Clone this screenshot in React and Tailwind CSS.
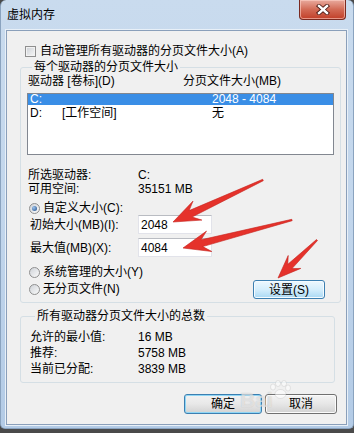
import React from "react";

function arrow(t, h, headLen, headW, neckW, tailW) {
  const dx = h[0] - t[0], dy = h[1] - t[1];
  const L = Math.hypot(dx, dy);
  const ux = dx / L, uy = dy / L, nx = -uy, ny = ux;
  const p = (x, y) => `${x.toFixed(1)},${y.toFixed(1)}`;
  const nk = [h[0] - ux * headLen * 0.72, h[1] - uy * headLen * 0.72];
  const wb = [h[0] - ux * headLen, h[1] - uy * headLen];
  return [
    p(t[0] + (nx * tailW) / 2, t[1] + (ny * tailW) / 2),
    p(nk[0] + (nx * neckW) / 2, nk[1] + (ny * neckW) / 2),
    p(wb[0] + (nx * headW) / 2, wb[1] + (ny * headW) / 2),
    p(h[0], h[1]),
    p(wb[0] - (nx * headW) / 2, wb[1] - (ny * headW) / 2),
    p(nk[0] - (nx * neckW) / 2, nk[1] - (ny * neckW) / 2),
    p(t[0] - (nx * tailW) / 2, t[1] - (ny * tailW) / 2),
  ].join(" ");
}

function Checkbox() {
  return (
    <span className="w-[11px] h-[11px] border border-[#8f8f8f] bg-gradient-to-br from-[#cdd1d6] to-[#f7f7f7] shadow-[inset_0_0_0_1px_#f2f2f2] shrink-0" />
  );
}

function Radio({ checked }) {
  return (
    <span className="w-[11px] h-[11px] rounded-full border border-[#8f8f8f] bg-gradient-to-br from-[#cfd3d8] to-[#fafafa] flex items-center justify-center shrink-0">
      {checked && (
        <span className="w-[5px] h-[5px] rounded-full bg-radial-[at_35%_35%] from-[#9cc3ee] to-[#1d4a85]" />
      )}
    </span>
  );
}

function Btn({ children, kind, className }) {
  const base =
    "h-[20px] rounded-[3px] border flex items-center justify-center text-[12px] leading-[14px] text-black ";
  let look =
    "border-[#707070] bg-gradient-to-b from-[#f4f4f4] via-[#e6e6e6] to-[#d2d2d2] shadow-[inset_0_0_0_1px_#fbfbfb]";
  if (kind === "hot")
    look =
      "border-[#3c7fb1] bg-gradient-to-b from-[#eef8fe] via-[#d5eefc] to-[#a9d9f4] shadow-[inset_0_0_0_1px_#f5fbff]";
  if (kind === "default")
    look =
      "border-[#3c7fb1] bg-gradient-to-b from-[#f2f2f2] via-[#e8e8e8] to-[#d2d2d2] shadow-[inset_0_0_0_1px_#8fd6f5]";
  return <div className={base + look + " " + (className || "")}>{children}</div>;
}

export default function App() {
  const a1 = arrow([263, 180], [173, 222], 27, 21, 7, 1.5);
  const a2 = arrow([292, 220], [183, 248], 27, 21, 7, 1.5);
  const a3 = arrow([317, 240], [278, 278], 23, 18, 6, 1.5);

  return (
    <div className="relative w-[354px] h-[433px] overflow-hidden bg-[#4a4a4a] font-['Liberation_Sans','Noto_Sans_CJK_SC',sans-serif] text-[12px] leading-[14px] text-black">
      <div className="w-[354px] h-[429px] rounded-t-[6px] rounded-b-[5px] border-x border-b border-[#8aa3bf] bg-gradient-to-b from-[#c9dbee] via-[#c2d6ec] to-[#b3cbe6] flex flex-col">
        {/* title bar */}
        <div className="h-[30px] flex items-start justify-between">
          <span className="pl-[6px] pt-[8px]">虚拟内存</span>
          <div className="mr-[7px] w-[47px] h-[20px] rounded-b-[4px] border border-t-0 border-[#7a2a20] bg-gradient-to-b from-[#e8aa9e] via-[#d26a55] to-[#c13d27] shadow-[inset_0_0_0_1px_rgba(255,210,200,0.6)] flex items-center justify-center">
            <svg width="14" height="11" viewBox="0 0 14 11">
              <path d="M3 2 L11 9 M11 2 L3 9" stroke="#4a1a14" strokeWidth="4.2" strokeLinecap="square" />
              <path d="M3 2 L11 9 M11 2 L3 9" stroke="#ffffff" strokeWidth="2.4" strokeLinecap="square" />
            </svg>
          </div>
        </div>

        {/* client area */}
        <div className="ml-[5px] w-[341px] h-[395px] border border-[#8a9fba] bg-[#f0f0f0] flex flex-col shadow-[0_0_0_1px_#e8f0f8]">
          <div className="mt-[13px] pl-[18px] h-[14px] flex items-center gap-[4px]">
            <Checkbox />
            <span>自动管理所有驱动器的分页文件大小(A)</span>
          </div>

          <fieldset className="mt-[2px] ml-[13px] w-[321px] border border-[#d5dfe5] rounded-[3px] pl-[6px] pb-[6px]">
            <legend className="ml-[5px] px-[2px] h-[14px] leading-[14px]">每个驱动器的分页文件大小</legend>
            <div className="flex h-[14px] pl-[1px]">
              <span className="w-[155px]">驱动器 [卷标](D)</span>
              <span>分页文件大小(MB)</span>
            </div>
            <div className="mt-[5px] w-[307px] h-[62px] border border-[#828790] bg-white">
              <div className="flex h-[11px] leading-[11px] bg-[#3a8ee6] text-white pl-[2px]">
                <span className="w-[182px]">C:</span>
                <span>2048 - 4084</span>
              </div>
              <div className="flex mt-[2px] h-[13px] leading-[13px] pl-[2px]">
                <span className="w-[32px]">D:</span>
                <span className="w-[150px]">[工作空间]</span>
                <span>无</span>
              </div>
            </div>

            <div className="mt-[14px] pl-[1px] flex flex-col">
              <div className="flex h-[13.5px] leading-[13.5px]">
                <span className="w-[110px]">所选驱动器:</span>
                <span>C:</span>
              </div>
              <div className="flex h-[13.5px] leading-[13.5px]">
                <span className="w-[110px]">可用空间:</span>
                <span>35151 MB</span>
              </div>
            </div>

            <div className="mt-[5px] pl-[2px] h-[14px] flex items-center gap-[3px]">
              <Radio checked />
              <span>自定义大小(C):</span>
            </div>
            <div className="flex items-center h-[19px]">
              <span className="pl-[3px] w-[111px]">初始大小(MB)(I):</span>
              <div className="w-[74px] h-[19px] bg-white border border-[#e2e3ea] border-t-[#b9bcc2] pl-[2px] flex items-center">2048</div>
            </div>
            <div className="mt-[4px] flex items-center h-[19px]">
              <span className="pl-[3px] w-[111px]">最大值(MB)(X):</span>
              <div className="w-[74px] h-[19px] bg-white border border-[#e2e3ea] border-t-[#b9bcc2] pl-[2px] flex items-center">4084</div>
            </div>

            <div className="mt-[8px] flex items-end justify-between">
              <div className="flex flex-col">
                <div className="pl-[2px] h-[14px] flex items-center gap-[3px]">
                  <Radio />
                  <span>系统管理的大小(Y)</span>
                </div>
                <div className="mt-[3px] pl-[2px] h-[14px] flex items-center gap-[3px]">
                  <Radio />
                  <span>无分页文件(N)</span>
                </div>
              </div>
              <Btn kind="hot" className="w-[72px] !h-[19px] mb-[-3px] mr-[15px]">设置(S)</Btn>
            </div>
          </fieldset>

          <fieldset className="mt-[6px] ml-[13px] w-[315px] border border-[#d5dfe5] rounded-[3px] pl-[9px] pb-[5px]">
            <legend className="ml-[5px] px-[2px] h-[14px] leading-[14px]">所有驱动器分页文件大小的总数</legend>
            <div className="mt-[6px] flex flex-col">
              <div className="flex h-[16px] items-center">
                <span className="w-[108px]">允许的最小值:</span>
                <span>16 MB</span>
              </div>
              <div className="flex h-[16px] items-center">
                <span className="w-[108px]">推荐:</span>
                <span>5758 MB</span>
              </div>
              <div className="flex h-[16px] items-center">
                <span className="w-[108px]">当前已分配:</span>
                <span>3839 MB</span>
              </div>
            </div>
          </fieldset>

          <div className="mt-[11px] flex justify-end gap-[3px] pr-[9px]">
            <Btn kind="default" className="w-[78px]">确定</Btn>
            <Btn className="w-[72px]">取消</Btn>
          </div>
        </div>
      </div>

      {/* faint watermark */}
      <div className="absolute left-[240px] top-[389px] flex items-end pointer-events-none select-none">
        <span className="text-[21px] leading-[22px] font-bold text-white/55 [text-shadow:0_0_1px_rgba(120,120,120,0.45)]">Bai</span>
      </div>
      <svg className="absolute left-[268px] top-[380px] pointer-events-none" width="24" height="20" viewBox="0 0 24 20">
        <g fill="rgba(255,255,255,0.55)" stroke="rgba(150,150,150,0.35)" strokeWidth="0.6">
          <ellipse cx="5" cy="7" rx="2.5" ry="3" />
          <ellipse cx="10" cy="3.5" rx="2.5" ry="3" />
          <ellipse cx="16" cy="3.5" rx="2.5" ry="3" />
          <ellipse cx="20" cy="8" rx="2.5" ry="3" />
          <ellipse cx="12.5" cy="14" rx="5.5" ry="4.5" />
        </g>
      </svg>

      {/* red annotation arrows */}
      <svg className="absolute inset-0 pointer-events-none" width="354" height="433" viewBox="0 0 354 433">
        <polygon points={a1} fill="#e5322b" stroke="#c4221c" strokeWidth="0.6" strokeLinejoin="round" />
        <polygon points={a2} fill="#e5322b" stroke="#c4221c" strokeWidth="0.6" strokeLinejoin="round" />
        <polygon points={a3} fill="#e5322b" stroke="#c4221c" strokeWidth="0.6" strokeLinejoin="round" />
      </svg>
    </div>
  );
}
